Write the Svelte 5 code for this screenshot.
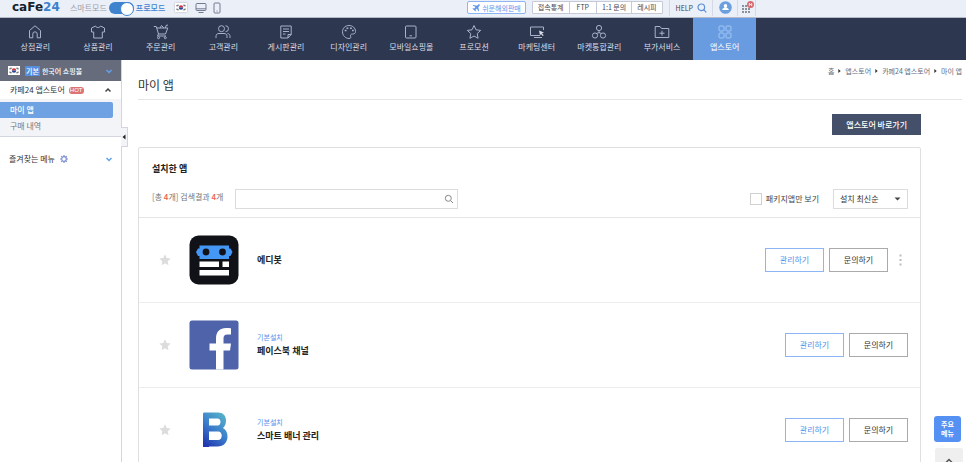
<script>
  let proMode = true;
  let packageOnly = false;
  let sortBy = 'recent';
  let searchTerm = '';
  let storeOpen = true;

  const menus = [
    { id: 'shop', name: '상점관리' },
    { id: 'product', name: '상품관리' },
    { id: 'order', name: '주문관리' },
    { id: 'customer', name: '고객관리' },
    { id: 'board', name: '게시판관리' },
    { id: 'design', name: '디자인관리' },
    { id: 'mobile', name: '모바일쇼핑몰' },
    { id: 'promotion', name: '프로모션' },
    { id: 'marketing', name: '마케팅센터' },
    { id: 'market', name: '마켓통합관리' },
    { id: 'service', name: '부가서비스' },
    { id: 'appstore', name: '앱스토어' }
  ];

  const quickLinks = ['접속통계', 'FTP', '1:1 문의', '레시피'];
  const crumbs = ['홈', '앱스토어', '카페24 앱스토어', '마이 앱'];

  const apps = [
    { id: 'edibot', name: '에디봇', preinstalled: false },
    { id: 'facebook', name: '페이스북 채널', preinstalled: true },
    { id: 'banner', name: '스마트 배너 관리', preinstalled: true }
  ];
</script>

{#snippet flag()}
  <svg class="flag" viewBox="0 0 24 18" aria-hidden="true">
    <rect width="24" height="18" fill="#fff" />
    <path d="M7.500 9a4.500 4.500 0 0 1 9 0z" fill="#d8313f" />
    <path d="M7.500 9a4.500 4.500 0 0 0 9 0z" fill="#23489b" />
    <path d="M3 6l3-3M4 7l3-3M18 3l3 3M17 4l3 3M3 12l3 3M4 11l3 3M21 12l-3 3M20 11l-3 3" stroke="#222" stroke-width="1.500" />
  </svg>
{/snippet}

<div class="admin">
  <header class="topbar">
    <a class="logo" href="/">caFe<span>24</span></a>
    <label class="mode">
      <span>스마트모드</span>
      <input type="checkbox" class="switch" bind:checked={proMode} />
      <span class="pro">프로모드</span>
    </label>
    <button class="flag-btn" aria-label="한국어">{@render flag()}</button>
    <button class="device" aria-label="PC">
      <svg width="12" height="12" viewBox="0 0 12 12">
        <rect x="1" y="1.5" width="10" height="7" rx="1" />
        <path d="M1 6.8h10M3.5 10.5h5" />
      </svg>
    </button>
    <button class="device" aria-label="모바일">
      <svg width="8" height="12" viewBox="0 0 8 12">
        <rect x="1" y="1" width="6" height="10" rx="1" />
        <path d="M3.5 9h1" />
      </svg>
    </button>

    <div class="top-links">
      <a class="overseas" href="/overseas">
        <svg width="8" height="8" viewBox="0 0 8 8">
          <path d="M7.600.4C7 0 6.300.3 5.800.9L5 1.700 1.200 1l-.6.6 3 1.500L2.300 4.400.9 4.300l-.5.5 1.700 1.100 1.100 1.700.5-.5-.1-1.400 1.300-1.300 1.500 3 .6-.6L6.300 3l.8-.8c.6-.5.9-1.200.5-1.800z" />
        </svg>
        쉬운해외판매
      </a>
      <div class="quick">
        {#each quickLinks as link}
          <a href="/quick">{link}</a>
        {/each}
      </div>
      <div class="help">
        <a href="/help">HELP</a>
        <svg width="10" height="10" viewBox="0 0 10 10">
          <circle cx="4.300" cy="4.300" r="3.300" />
          <path d="M6.700 6.700L9.300 9.300" />
        </svg>
      </div>
      <button class="user" aria-label="내 정보">
        <svg width="13" height="13" viewBox="0 0 13 13">
          <circle cx="6.500" cy="6.500" r="6.300" fill="#6c9fe0" />
          <path d="M6.500 3a1.700 1.700 0 0 1 1.700 1.800c0 1-.4 1.500-.8 1.900 1.400.3 2.200.7 2.400 2.300H3.200c.2-1.600 1-2 2.400-2.300-.4-.4-.8-.9-.8-1.900A1.700 1.700 0 0 1 6.500 3z" fill="#fff" />
        </svg>
      </button>
      <button class="grid-btn" aria-label="전체 서비스">
        <svg width="14" height="14" viewBox="0 0 14 14">
          <path d="M2 4h2v2H2zM5 4h2v2H5zM8 4h2v2H8zM2 7h2v2H2zM5 7h2v2H5zM8 7h2v2H8zM2 10h2v2H2zM5 10h2v2H5zM8 10h2v2H8z" fill="#8d9096" />
          <circle cx="10.500" cy="3.500" r="3.500" fill="#d86870" />
          <path d="M9.300 2v3M11.700 2v3M9.300 2.500l2.400 2" stroke="#fff" stroke-width=".8" />
        </svg>
      </button>
    </div>
  </header>

  <nav class="menu">
    {#each menus as menu}
      <a href="/{menu.id}" class={menu.id === 'appstore' ? 'active' : ''}>
        <svg width="16" height="16" viewBox="0 0 16 16">
          {#if menu.id === 'shop'}
            <path d="M2.500 6.500L8 1.800l5.500 4.700v7.300h-3.300V10a2.200 2.200 0 0 0-4.400 0v3.800H2.500z" />
          {:else if menu.id === 'product'}
            <path d="M5.500 2L1.500 4v4h2.200v6h8.600V8h2.200V4l-4-2c-.7 2-4.300 2-5 0z" />
          {:else if menu.id === 'order'}
            <path d="M.8 2.500h2.400L5.500 10h7l2.300-6H4M5.500 10l-1 2h8.500M12.500 4l.5-2.500 2-.5M7 4l1.500-2.500L11 4" />
            <circle cx="5.500" cy="13.700" r="1" />
            <circle cx="12.300" cy="13.700" r="1" />
          {:else if menu.id === 'customer'}
            <circle cx="6.500" cy="4.700" r="3" />
            <path d="M1 14v-1.500c0-2 1-3 3-3h5c2 0 3 1 3 3V14M10.500 1.700a3 3 0 0 1 0 6M12.500 9.500c1.700.3 2.500 1.300 2.500 3V14" />
          {:else if menu.id === 'board'}
            <path d="M2.800 2h10.400v8.500L10 14H2.800zM13.200 10.500H10V14M5 5h6M5 7.500h6M5 10h2.500" />
          {:else if menu.id === 'design'}
            <path d="M8 1.500c-3.800 0-6.500 2.800-6.500 6.300S4.300 14.500 8 14.500c1.600 0 2-.8 1.700-1.800-.6-1.800.2-2.700 2-2.700 1.800 0 2.800-.8 2.800-2.600C14.500 4 11.700 1.500 8 1.500z" />
            <path class="dots" d="M3.700 6.500h1.800M5.500 4.300h1.800M9 4.300h1.800M11 6.500h1.800" />
          {:else if menu.id === 'mobile'}
            <rect x="2.500" y="2" width="10.500" height="12" rx="1" />
            <path d="M6.500 11.800h2.500" />
          {:else if menu.id === 'promotion'}
            <path d="M8 1.500l2 4.300 4.700.6-3.500 3.200.9 4.700L8 12l-4.100 2.300.9-4.700L1.300 6.400 6 5.800z" />
          {:else if menu.id === 'marketing'}
            <path d="M14.500 6V3h-13v8.500h9.500M5 13.500h8" />
            <path d="M10 6.500l5 2-2 .8 1.700 2-1 .8-1.700-2-1 1.500z" class="solid" />
          {:else if menu.id === 'market'}
            <circle cx="8" cy="4" r="2.600" />
            <circle cx="4" cy="11.500" r="2.600" />
            <circle cx="12" cy="11.500" r="2.600" />
            <path d="M8 6.600v2L5.500 9.500M8 8.600l2.500.9" />
          {:else if menu.id === 'service'}
            <path d="M1.200 13.500V2.500H6L7.500 4.500h7.300v9zM8 6.700v5M5.500 9.200h5" />
          {:else}
            <rect x="2" y="2" width="5" height="5" rx="1" />
            <rect x="9" y="2" width="5" height="5" rx="1" />
            <rect x="2" y="9" width="5" height="5" rx="1" />
            <rect x="9" y="9" width="5" height="5" rx="1" />
          {/if}
        </svg>
        <span>{menu.name}</span>
      </a>
    {/each}
  </nav>

  <div class="body">
    <aside class="sidebar">
      <button class="shop-select">
        {@render flag()}
        <span class="tag">기본</span>
        <span>한국어 쇼핑몰</span>
        <svg class="chevron" width="8" height="8" viewBox="0 0 8 8"><path d="M1.500 3L4 5.500 6.500 3" /></svg>
      </button>
      <button class="section-title" on:click={() => (storeOpen = !storeOpen)}>
        <span>카페24 앱스토어</span>
        <span class="hot">HOT</span>
        <svg class="chevron dark" width="8" height="8" viewBox="0 0 8 8"><path d="M1.500 5.500L4 3l2.500 2.500" /></svg>
      </button>
      {#if storeOpen}
        <div class="submenu">
          <a href="/myapps" class="current">마이 앱</a>
          <a href="/orders">구매 내역</a>
        </div>
      {/if}
      <button class="favorites">
        <span>즐겨찾는 메뉴</span>
        <svg width="8" height="8" viewBox="0 0 8 8">
          <circle cx="4" cy="4" r="2.300" fill="none" stroke="#7f90d0" stroke-width="1.200" />
          <path d="M4 0v1.500M4 6.500V8M0 4h1.500M6.500 4H8M1.200 1.200l1 1M5.800 5.800l1 1M6.800 1.200l-1 1M2.200 5.800l-1 1" stroke="#7f90d0" stroke-width="1.200" />
        </svg>
        <svg class="chevron" width="8" height="8" viewBox="0 0 8 8"><path d="M1.500 3L4 5.500 6.500 3" /></svg>
      </button>
      <button class="fold" aria-label="메뉴 접기">
        <svg width="4" height="6" viewBox="0 0 4 6"><path d="M3.500 .5v5L.5 3z" fill="#222" /></svg>
      </button>
    </aside>

    <main class="content">
      <div class="crumbs">
        {#each crumbs as crumb, i}
          {#if i > 0}
            <svg width="3" height="4" viewBox="0 0 3 4"><path d="M.3 0L2.700 2 .3 4z" fill="#333" /></svg>
          {/if}
          <a href="/path">{crumb}</a>
        {/each}
      </div>
      <h1>마이 앱</h1>

      <div class="inner">
        <a class="store-link" href="/store">앱스토어 바로가기</a>

        <section class="panel">
          <div class="panel-head">
            <h2>설치한 앱</h2>
            <div class="filters">
              <p class="count">[총 <b>4</b>개] 검색결과 <b>4</b>개</p>
              <div class="search">
                <input type="text" aria-label="앱 검색" bind:value={searchTerm} />
                <button aria-label="검색">
                  <svg width="10" height="10" viewBox="0 0 10 10">
                    <circle cx="4.300" cy="4.300" r="3" />
                    <path d="M6.500 6.500L9 9" />
                  </svg>
                </button>
              </div>
              <label class="package">
                <input type="checkbox" bind:checked={packageOnly} />
                패키지앱만 보기
              </label>
              <div class="sort">
                <select aria-label="정렬" bind:value={sortBy}>
                  <option value="recent">설치 최신순</option>
                  <option value="name">이름순</option>
                </select>
                <svg width="7" height="4" viewBox="0 0 7 4"><path d="M.5 .5h6L3.500 3.500z" fill="#444" /></svg>
              </div>
            </div>
          </div>

          <ul class="apps">
            {#each apps as app}
              <li>
                <button class="star" aria-label="즐겨찾기">
                  <svg width="12" height="12" viewBox="0 0 12 12">
                    <path d="M6 .3l1.700 3.700 4 .5-3 2.800.8 4L6 9.300l-3.500 2 .8-4-3-2.800 4-.5z" fill="#dcdcdc" />
                  </svg>
                </button>
                <svg class="app-icon" viewBox="0 0 50 50" aria-hidden="true">
                  {#if app.id === 'edibot'}
                    <rect x=".5" y=".5" width="49" height="49" rx="9" fill="#101217" />
                    <path d="M10.500 10.500h29.500v3h1.500l2 3.500-2 4H40v3H10.500v-3H9L7 17l2-3.500h1.500z" fill="#4597f5" />
                    <circle cx="17" cy="17" r="3.400" fill="#101217" />
                    <circle cx="33.500" cy="17" r="3.400" fill="#101217" />
                    <path d="M10.500 26.500H30V32H10.500zM33.500 26.500H40V32h-6.500zM10.500 35H40v5.500H10.500z" fill="#fff" />
                  {:else if app.id === 'facebook'}
                    <rect x=".5" y=".5" width="49" height="49" rx="2.500" fill="#4f63aa" />
                    <path d="M27 49.500V30.500h-6.500v-7H27v-5c0-7 4-10.500 10-10.500 2 0 4 .1 5 .3v6.200h-3.500c-3 0-4 1.300-4 4v5H42l-1 7h-6.500v19z" fill="#fff" />
                  {:else}
                    <defs>
                      <linearGradient id="banner-fill" x1=".8" y1="0" x2=".2" y2="1">
                        <stop offset="0" stop-color="#55b4c8" />
                        <stop offset=".5" stop-color="#3c7fcc" />
                        <stop offset="1" stop-color="#2138b0" />
                      </linearGradient>
                    </defs>
                    <path fill="url(#banner-fill)" fill-rule="evenodd" d="M14 9c0-1 .5-1.500 1.500-1.500H29c5 0 8 3 8 8 0 3.500-1 5.500-3 7.500 3 2 4.500 4.500 4.500 8.500 0 6-4 10-10 10H20V42h-6zM20 13.500v7h8.500c4 0 4-7 0-7zM20 26.500v8.500h9c5 0 5-8.500 0-8.500z" />
                  {/if}
                </svg>
                <div class="app-name">
                  {#if app.preinstalled}
                    <span>기본설치</span>
                  {/if}
                  <strong>{app.name}</strong>
                </div>
                <div class="actions">
                  <button class="manage">관리하기</button>
                  <button>문의하기</button>
                  {#if !app.preinstalled}
                    <button class="more" aria-label="더보기">
                      <svg width="3" height="12" viewBox="0 0 3 12">
                        <path d="M.5 .5h2v2h-2zM.5 5h2v2h-2zM.5 9.500h2v2h-2z" fill="#bbb" />
                      </svg>
                    </button>
                  {/if}
                </div>
              </li>
            {/each}
          </ul>
        </section>
      </div>
    </main>
  </div>

  <div class="floating">
    <button class="main-menu">
      <span>주요</span>
      <span>메뉴</span>
    </button>
    <button class="to-top" aria-label="맨 위로">
      <svg width="10" height="6" viewBox="0 0 10 6"><path d="M1 5.500l4-4 4 4" fill="none" stroke="#555" stroke-width="1.500" /></svg>
    </button>
  </div>
</div>

<style>
  :global(body) {
    margin: 0;
  }

  .admin {
    display: flex;
    flex-direction: column;
    height: 100vh;
    overflow: hidden;
    background: #fff;
    color: #333;
    font-family: 'Noto Sans CJK KR', sans-serif;
    font-size: 8px;
    line-height: 12px;
  }

  .admin * {
    box-sizing: border-box;
  }

  a {
    color: inherit;
    text-decoration: none;
  }

  button,
  input,
  select {
    margin: 0;
    padding: 0;
    border: 0;
    background: none;
    color: inherit;
    font: inherit;
  }

  button {
    cursor: pointer;
  }

  svg {
    display: block;
    flex-shrink: 0;
  }

  .topbar {
    display: flex;
    align-items: center;
    flex-shrink: 0;
    height: 18px;
    padding: 0 0 2px 12px;
    background: #ebeff8;
    border-bottom: 1px solid #b4bac8;
  }

  .logo {
    width: 58px;
    color: #14222e;
    font-family: 'DejaVu Sans', sans-serif;
    font-size: 12px;
    font-weight: 700;
    line-height: 15px;
  }

  .logo span {
    color: #3b82cf;
  }

  .mode {
    display: flex;
    align-items: center;
    gap: 2px;
    color: #999da6;
  }

  .pro {
    color: #3f83cf;
    font-weight: 500;
  }

  .switch {
    appearance: none;
    width: 25px;
    height: 12px;
    border-radius: 6px;
    background: #b5bac5;
  }

  .switch::before {
    content: '';
    display: block;
    width: 12px;
    height: 12px;
    border-radius: 50%;
    background: #fff;
    border: 1px solid #b5bac5;
  }

  .switch:checked {
    background: #3f83cf;
  }

  .switch:checked::before {
    margin-left: auto;
    border-color: #3f83cf;
  }

  .flag {
    width: 12px;
    height: 9px;
    background: #fff;
  }

  .flag-btn {
    margin: 0 8px 0 10px;
    box-shadow: 0 0 2px #aaa;
  }

  .device {
    margin-right: 6px;
  }

  .device svg {
    fill: none;
    stroke: #737b90;
  }

  .top-links {
    display: flex;
    align-items: center;
    margin-left: auto;
    margin-right: 210px;
    color: #3f4452;
    font-size: 7px;
    white-space: nowrap;
  }

  .overseas {
    display: flex;
    align-items: center;
    gap: 2px;
    height: 13px;
    padding: 0 4px;
    margin-right: 6px;
    background: #fff;
    border: 1px solid #8bb5f5;
    border-radius: 2px;
    color: #5b95ee;
  }

  .overseas svg {
    fill: #5b95ee;
  }

  .quick {
    display: flex;
    height: 13px;
    background: #fff;
    border: 1px solid #c5cad6;
    border-radius: 1px;
  }

  .quick a {
    padding: 0 5px;
    line-height: 11px;
  }

  .quick a:nth-child(2) {
    padding: 0 7px;
  }

  .quick a + a {
    border-left: 1px solid #c5cad6;
  }

  .help {
    display: flex;
    align-items: center;
    gap: 4px;
    height: 17px;
    margin-left: 6px;
    padding: 0 5px 0 6px;
    border-left: 1px solid #d5d9e3;
  }

  .help svg {
    fill: none;
    stroke: #5b8fd6;
    stroke-width: 1.2;
  }

  .user,
  .grid-btn {
    display: flex;
    align-items: center;
    justify-content: center;
    width: 25px;
    height: 17px;
    border-left: 1px solid #d5d9e3;
  }

  .grid-btn {
    width: 19px;
    border-right: 1px solid #d5d9e3;
  }

  .menu {
    display: flex;
    flex-shrink: 0;
    height: 42px;
    padding: 0 210px 0 4px;
    background: #2d3750;
  }

  .menu a {
    display: flex;
    flex: 1;
    flex-direction: column;
    align-items: center;
    gap: 1px;
    padding-top: 6px;
    color: #d9dde8;
    white-space: nowrap;
  }

  .menu a.active {
    background: #689bdf;
    color: #fff;
  }

  .menu svg {
    fill: none;
    stroke: #aab3c8;
  }

  .menu .active svg {
    stroke: #a5c8f5;
  }

  .menu .dots {
    stroke-width: 1.5;
  }

  .menu .solid {
    fill: #d9dde8;
    stroke: none;
  }

  .body {
    display: flex;
    flex: 1;
    min-height: 0;
  }

  .sidebar {
    position: relative;
    flex-shrink: 0;
    width: 122px;
    border-right: 1px solid #d3d6de;
  }

  .sidebar button {
    display: flex;
    align-items: center;
    width: 100%;
    text-align: left;
  }

  .sidebar .chevron {
    margin-left: auto;
    fill: none;
    stroke: #62a1ee;
    stroke-width: 1.5;
  }

  .sidebar .chevron.dark {
    stroke: #444;
  }

  .sidebar .shop-select {
    height: 21px;
    padding: 0 8px;
    background: #666c7b;
    color: #fff;
    font-size: 7px;
    font-weight: 500;
  }

  .tag {
    margin: 0 2px 0 5px;
    padding: 0 1px;
    background: #568ede;
    line-height: 10px;
  }

  .sidebar .section-title {
    height: 18px;
    padding: 0 9px 0 10px;
  }

  .hot {
    margin-left: 4px;
    padding: 0 1px;
    border-radius: 3px;
    background: #dc7474;
    color: #fff;
    font-family: 'Liberation Sans', sans-serif;
    font-size: 6px;
    line-height: 7px;
  }

  .submenu {
    padding: 3px 8px 2px 0;
    background: #f3f4f7;
    border-bottom: 1px solid #d3d6de;
  }

  .submenu a {
    display: block;
    padding-left: 10px;
    color: #777;
    line-height: 16px;
  }

  .submenu .current {
    border-radius: 0 2px 2px 0;
    background: #6ea2e3;
    color: #fff;
    font-weight: 500;
  }

  .sidebar .favorites {
    margin-top: 16px;
    padding: 0 8px 0 9px;
    gap: 5px;
  }

  .sidebar .fold {
    position: absolute;
    top: 67px;
    right: -7px;
    justify-content: center;
    width: 7px;
    height: 20px;
    background: #f3f4f7;
    border: 1px solid #d3d6de;
    border-left: 0;
  }

  .content {
    flex: 1;
    min-width: 0;
    padding: 5px 4px 0 16px;
  }

  .crumbs {
    display: flex;
    align-items: center;
    justify-content: flex-end;
    gap: 4px;
    color: #5c6a80;
    font-size: 7px;
  }

  h1 {
    margin: 0;
    padding-bottom: 6px;
    border-bottom: 1px solid #e5e5e5;
    color: #333;
    font-size: 12px;
    font-weight: 400;
    line-height: 16px;
  }

  .inner {
    display: flex;
    flex-direction: column;
    padding: 14px 41px 0 0;
  }

  .store-link {
    align-self: flex-end;
    padding: 0 14px;
    background: #444f69;
    color: #fff;
    font-weight: 500;
    line-height: 21px;
  }

  .panel {
    margin-top: 12px;
    border: 1px solid #dfdfdf;
    border-radius: 2px 2px 0 0;
  }

  .panel-head {
    padding: 14px 12px 8px 13px;
    border-bottom: 1px solid #e5e5e5;
  }

  h2 {
    margin: 0 0 13px;
    color: #222;
    font-size: 9px;
    font-weight: 700;
    line-height: 14px;
  }

  .filters {
    display: flex;
    align-items: center;
  }

  .count {
    width: 83px;
    margin: 0;
    padding-bottom: 4px;
    color: #777;
    white-space: nowrap;
  }

  .count b {
    color: #f0554a;
    font-weight: 500;
  }

  .search {
    display: flex;
    align-items: center;
    width: 223px;
    height: 20px;
    padding-right: 3px;
    border: 1px solid #dcdcdc;
  }

  .search input {
    flex: 1;
    min-width: 0;
    height: 18px;
    padding: 0 6px;
    outline: 0;
  }

  .search svg {
    fill: none;
    stroke: #888;
  }

  .package {
    display: flex;
    align-items: center;
    gap: 4px;
    margin-left: auto;
    color: #444;
  }

  .package input {
    appearance: none;
    width: 12px;
    height: 12px;
    border: 1px solid #d0d0d0;
  }

  .package input:checked {
    background: #568ede;
  }

  .sort {
    display: flex;
    align-items: center;
    width: 75px;
    height: 20px;
    margin-left: 14px;
    padding-right: 6px;
    border: 1px solid #dcdcdc;
    color: #333;
  }

  .sort select {
    appearance: none;
    flex: 1;
    min-width: 0;
    height: 18px;
    padding-left: 6px;
    outline: 0;
  }

  .apps {
    margin: 0;
    padding: 0;
    list-style: none;
  }

  .apps li {
    display: flex;
    align-items: center;
    padding: 17px 12px 17px 20px;
    border-bottom: 1px solid #ededed;
  }

  .app-icon {
    width: 50px;
    height: 50px;
    margin: 0 18px;
  }

  .app-name {
    display: flex;
    flex-direction: column;
  }

  .app-name span {
    color: #5590ee;
    font-size: 7px;
  }

  .app-name strong {
    color: #222;
    font-size: 9px;
    font-weight: 700;
    line-height: 16px;
  }

  .actions {
    display: flex;
    gap: 5px;
    margin-left: auto;
  }

  .actions button {
    width: 59px;
    height: 24px;
    border: 1px solid #aaa;
    color: #333;
  }

  .actions .manage {
    border-color: #8bb5f5;
    color: #5590ee;
  }

  .actions .more {
    display: flex;
    align-items: center;
    justify-content: center;
    width: 15px;
    border: 0;
  }

  .floating {
    position: fixed;
    right: 3px;
    bottom: -8px;
    display: flex;
    flex-direction: column;
    align-items: flex-end;
    gap: 6px;
  }

  .main-menu {
    display: flex;
    flex-direction: column;
    align-items: center;
    justify-content: center;
    width: 27px;
    height: 26px;
    margin-right: 2px;
    border-radius: 3px;
    background: #5591f2;
    color: #fff;
    font-size: 7px;
    font-weight: 700;
    line-height: 9px;
  }

  .to-top {
    display: flex;
    justify-content: center;
    width: 28px;
    height: 22px;
    padding-top: 10px;
    border-radius: 2px;
    background: #efefef;
  }
</style>
